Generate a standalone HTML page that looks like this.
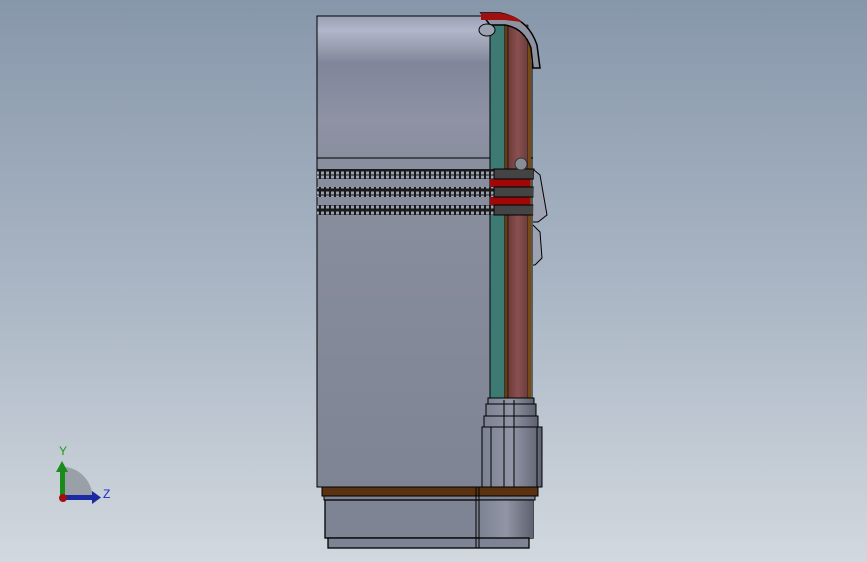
<!DOCTYPE html><html><head><style>html,body{margin:0;padding:0}body{width:867px;height:562px;overflow:hidden;background:linear-gradient(#8797aa,#a9b5c4 50%,#d2d8de)}</style></head><body>
<svg width="867" height="562" viewBox="0 0 867 562" style="position:absolute;left:0;top:0">
<defs>
<linearGradient id="bd" x1="0" y1="0" x2="0" y2="1">
<stop offset="0" stop-color="#9a9fb4"/><stop offset="0.03" stop-color="#b2b6ca"/><stop offset="0.06" stop-color="#9ea2b4"/><stop offset="0.1" stop-color="#80869a"/><stop offset="0.22" stop-color="#8e92a4"/><stop offset="0.3" stop-color="#8a8fa0"/><stop offset="1" stop-color="#7f8494"/></linearGradient>
<linearGradient id="cy" x1="0" y1="0" x2="1" y2="0"><stop offset="0" stop-color="#7d8293"/><stop offset="0.5" stop-color="#9195a5"/><stop offset="1" stop-color="#5d6170"/></linearGradient>
<linearGradient id="mr" x1="0" y1="0" x2="1" y2="0"><stop offset="0" stop-color="#6c3a38"/><stop offset="0.5" stop-color="#8a5050"/><stop offset="1" stop-color="#6a3d3a"/></linearGradient>
<pattern id="dash" width="5" height="10" patternUnits="userSpaceOnUse"><rect width="5" height="10" fill="#1a1a1a"/><rect x="1" y="1.5" width="3" height="3" fill="#9aa0b0"/><rect x="1" y="5.5" width="3" height="3" fill="#9aa0b0"/></pattern>
</defs>
<rect x="317" y="16" width="173" height="471" fill="url(#bd)" stroke="#000" stroke-width="1"/>
<line x1="317" y1="158" x2="533" y2="158" stroke="#000"/>
<rect x="490" y="25" width="15" height="375" fill="#3e7a74" stroke="#000"/>
<rect x="505" y="25" width="3" height="375" fill="#6a3a10"/>
<rect x="508" y="25" width="20" height="375" fill="url(#mr)" stroke="#000" stroke-width="0.6"/>
<rect x="528" y="40" width="3" height="360" fill="#7a4a10"/>
<line x1="532" y1="40" x2="532" y2="400" stroke="#000"/>
<path d="M481 13 L500 13 Q528 18 537 45 L540 68 L533 68 L531 48 Q524 28 505 25 L490 25 Z" fill="#8e93a2" stroke="#000" stroke-width="1.5"/>
<path d="M481 13 L500 13 Q515 15 522 22 L505 20 L481 20 Z" fill="#a01010"/>
<ellipse cx="487" cy="30" rx="8" ry="6" fill="#9ea3b2" stroke="#000"/>
<rect x="490" y="178" width="40" height="9" fill="#a00808"/>
<rect x="490" y="196" width="40" height="9" fill="#a00808"/>
<rect x="317" y="169" width="177" height="10" fill="url(#dash)"/>
<rect x="317" y="187" width="177" height="10" fill="url(#dash)"/>
<rect x="317" y="205" width="177" height="10" fill="url(#dash)"/>
<rect x="494" y="169" width="40" height="10" fill="#444" stroke="#000"/>
<rect x="494" y="187" width="40" height="10" fill="#444" stroke="#000"/>
<rect x="494" y="205" width="40" height="10" fill="#444" stroke="#000"/>
<circle cx="521" cy="164" r="6" fill="#8a8d96" stroke="#333"/>
<path d="M534 170 L540 175 L547 215 L538 222 L533 222" fill="#9ea3b2" stroke="#000"/>
<path d="M533 225 L540 232 L542 258 L535 265 L533 265" fill="#9ea3b2" stroke="#000"/>
<rect x="488" y="398" width="46" height="6" fill="url(#cy)" stroke="#000"/>
<rect x="486" y="404" width="50" height="12" fill="url(#cy)" stroke="#000"/>
<rect x="484" y="416" width="54" height="11" fill="url(#cy)" stroke="#000"/>
<rect x="482" y="427" width="60" height="60" fill="url(#cy)" stroke="#000"/>
<line x1="491" y1="427" x2="491" y2="487" stroke="#000"/><line x1="504" y1="400" x2="504" y2="487" stroke="#000"/><line x1="514" y1="400" x2="514" y2="487" stroke="#000"/><line x1="537" y1="427" x2="537" y2="487" stroke="#000"/>
<rect x="322" y="487" width="216" height="9" fill="#5a3210" stroke="#000"/>
<rect x="324" y="496" width="211" height="4" fill="#7e8394" stroke="#000"/>
<rect x="325" y="500" width="208" height="38" fill="#7f8495" stroke="#000" stroke-width="1.3"/>
<rect x="479" y="500" width="54" height="38" fill="url(#cy)"/>
<rect x="328" y="538" width="201" height="10" fill="#7f8495" stroke="#000" stroke-width="1.3"/>
<line x1="476" y1="487" x2="476" y2="548" stroke="#000"/><line x1="479" y1="487" x2="479" y2="548" stroke="#000"/>
<line x1="325" y1="500" x2="533" y2="500" stroke="#000"/>
<path d="M63 500 L63 467 A30 33 0 0 1 93 500 Z" fill="#9aa0a8"/>
<rect x="60" y="470" width="5" height="30" fill="#1a8a1a"/><path d="M56 472 L62 461 L68 472 Z" fill="#1a8a1a"/>
<rect x="63" y="495" width="30" height="5" fill="#1a2aa0"/><path d="M92 491 L101 497.5 L92 504 Z" fill="#1a2aa0"/>
<circle cx="63" cy="498" r="4" fill="#a01010"/>
<text x="59" y="455" font-family="Liberation Sans,sans-serif" font-size="12" fill="#1a9a1a">Y</text>
<text x="103" y="498" font-family="Liberation Sans,sans-serif" font-size="12" fill="#1a2ad0">Z</text>
</svg></body></html>
